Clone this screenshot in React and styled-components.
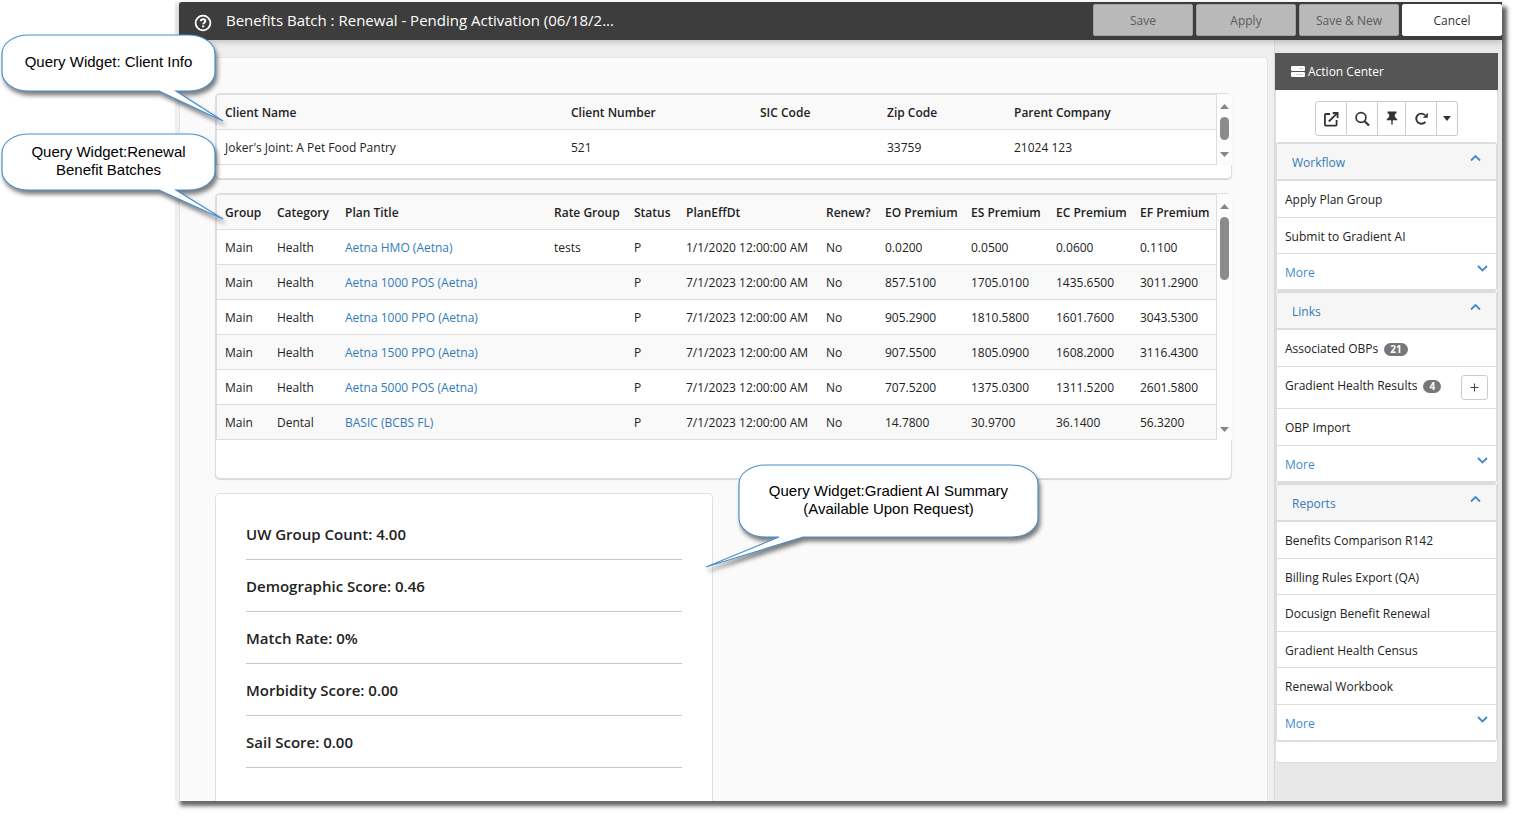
import React from "react";
import styled, { createGlobalStyle } from "styled-components";

const GlobalStyle = createGlobalStyle`
  *, *::before, *::after { box-sizing: border-box; }
  body {
    margin: 0;
    background: #fff;
    color: #222;
    font-family: "Open Sans", "Noto Sans", sans-serif;
    font-size: 12px;
    line-height: 18px;
  }
  button { font-family: inherit; }
`;

/* ---------- window frame ---------- */

const Page = styled.div`
  position: relative;
  height: 100vh;
  min-height: 480px;
  padding: 2px 15px 15px 175px;
  overflow: hidden;
`;

const Window = styled.div`
  display: flex;
  flex-direction: column;
  height: 100%;
  padding-left: 4px;
  background: #efefef;
  box-shadow: 5px 5px 4px rgba(0, 0, 0, 0.6);
`;

const TopBar = styled.header`
  position: relative;
  flex: none;
  display: flex;
  align-items: center;
  height: 38px;
  padding-left: 15px;
  background: #3d3d3d;
  border-top-left-radius: 3px;
  box-shadow: 0 2px 6px rgba(0, 0, 0, 0.2);
`;

const HelpButton = styled.button`
  display: flex;
  margin: 4px 14px 0 0;
  padding: 0;
  border: 0;
  background: none;
`;

const Title = styled.h1`
  flex: 1;
  margin: 0 0 2px;
  color: #fff;
  font-size: 15px;
  font-weight: 400;
  line-height: 20px;
  white-space: nowrap;
`;

const BarActions = styled.div`
  display: flex;
  gap: 3px;
`;

const BarButton = styled.button`
  width: 100px;
  height: 32px;
  margin-bottom: 2px;
  padding: 0;
  border: 1px solid ${(p) => (p.$light ? "#fff" : "#a3a3a3")};
  border-radius: 2px;
  background: ${(p) => (p.$light ? "#fff" : "#b9b9b9")};
  color: ${(p) => (p.$light ? "#333" : "#5c5c5c")};
  font-size: 12px;
`;

const Body = styled.div`
  flex: 1;
  min-height: 0;
  display: flex;
  gap: 6px;
  overflow: hidden;
`;

/* ---------- main column ---------- */

const Main = styled.main`
  flex: 1;
  min-width: 0;
  margin-top: 17px;
  padding: 35px 35px 0 35px;
  display: flex;
  flex-direction: column;
  gap: 14px;
  border: 1px solid #e4e4e4;
  border-bottom: 0;
  border-radius: 3px 3px 0 0;
  background: #fafafa;
`;

const Card = styled.section`
  flex: none;
  border: 1px solid #dcdee2;
  border-radius: 5px;
  background: #fff;
  box-shadow: 0 1px 1px #d4d4d4;
  padding-bottom: ${(p) => p.$foot}px;
`;

const TableFrame = styled.div`
  display: flex;
`;

const DataTable = styled.table`
  flex: 1;
  width: 100%;
  min-width: 0;
  table-layout: fixed;
  border-collapse: separate;
  border-spacing: 0;
  border: 1px solid #dcdee2;
  border-bottom: 0;

  th, td {
    height: 35px;
    padding: 2px 0 0 8px;
    border-bottom: 1px solid #dcdee4;
    text-align: left;
    white-space: nowrap;
  }
  th { font-weight: 600; background: #f9f9f9; }
  tbody tr:nth-child(even) { background: #f9f9f9; }
`;

const PlanLink = styled.a`
  color: #337ab7;
  text-decoration: none;
`;

const ScrollTrack = styled.div`
  flex: none;
  width: 15px;
  display: flex;
  flex-direction: column;
  align-items: center;
  gap: 8px;
  padding: 10px 0 8px;
  background: #fcfcfc;
`;

const ScrollThumb = styled.div`
  width: 9px;
  height: ${(p) => p.$size}px;
  margin-bottom: auto;
  border-radius: 5px;
  background: #8b8b8b;
`;

const SummaryCard = styled.section`
  flex: 1 0 auto;
  width: 49%;
  padding: 14px 30px 0;
  border: 1px solid #e0e0e0;
  border-bottom: 0;
  border-radius: 5px 5px 0 0;
  background: #fff;
`;

const SummaryRow = styled.p`
  height: 52px;
  margin: 0;
  padding-top: 16px;
  border-bottom: 1px solid #c6c6c6;
  font-size: 15px;
  font-weight: 600;
  line-height: 20px;
`;

/* ---------- action center ---------- */

const Side = styled.aside`
  flex: none;
  width: 228px;
  padding: 13px 4px 0 0;
  border-left: 1px solid #d9d9d9;
  background: #e8e8e8;
`;

const SideHead = styled.h2`
  display: flex;
  align-items: center;
  gap: 3px;
  height: 37px;
  margin: 0;
  padding-left: 16px;
  background: #555;
  color: #fff;
  font-size: 12px;
  font-weight: 400;
`;

const SideBody = styled.div`
  padding-bottom: 20px;
  border-left: 1px solid #ddd;
  border-right: 1px solid #ddd;
  border-bottom: 1px solid #ddd;
  border-radius: 0 0 3px 3px;
  background: #fff;
`;

const Tools = styled.div`
  display: flex;
  justify-content: center;
  height: 52px;
  padding-top: 11px;
`;

const ToolButton = styled.button`
  display: flex;
  align-items: center;
  justify-content: center;
  width: ${(p) => p.$w}px;
  height: 35px;
  padding: 0;
  border: 1px solid #ccc;
  background: #fff;
  & + & { border-left: 0; }
  &:first-child { border-radius: 3px 0 0 3px; }
  &:last-child { border-radius: 0 3px 3px 0; }
`;

const Group = styled.section`
  border: 1px solid #ddd;
  border-top-width: 2px;
  border-radius: 3px;
`;

const GroupHead = styled.button`
  display: flex;
  justify-content: space-between;
  width: 100%;
  height: 37px;
  padding: 10px 15px 0;
  border: 0;
  border-bottom: 2px solid #ddd;
  background: #f6f6f6;
  color: #337ab7;
  font-size: 12px;
  line-height: 18px;
`;

const ItemList = styled.ul`
  margin: 0;
  padding: 0;
  list-style: none;
`;

const Item = styled.li`
  display: flex;
  align-items: flex-start;
  height: ${(p) => (p.$tall ? 42 : 36)}px;
  padding: 10px 8px 0;
  border-bottom: 1px solid #ddd;
  &:nth-child(odd) { height: 37px; }
  &:last-child { height: 36px; }
`;

const ItemLink = styled.a`
  color: ${(p) => (p.$more ? "#428bca" : "#222")};
  text-decoration: none;
  white-space: nowrap;
`;

const Badge = styled.span`
  margin: 3px 0 0 6px;
  padding: 0 6px;
  border-radius: 7px;
  background: #777;
  color: #fff;
  font-size: 10px;
  font-weight: 700;
  line-height: 13px;
`;

const AddButton = styled.button`
  display: flex;
  align-items: center;
  justify-content: center;
  width: 27px;
  height: 25px;
  margin: -2px 0 0 auto;
  padding: 0;
  border: 1px solid #ccc;
  border-radius: 3px;
  background: #fff;
`;

const ChevronSlot = styled.span`
  display: flex;
  margin-left: auto;
`;

/* ---------- annotation bubbles ---------- */

const Bubble = styled.div`
  position: absolute;
  left: ${(p) => p.$x}px;
  top: ${(p) => p.$y}px;
  width: ${(p) => p.$w}px;
  height: ${(p) => p.$h}px;
  display: flex;
  align-items: center;
  justify-content: center;
  padding-bottom: 2px;
  color: #000;
  font-family: "Liberation Sans", Arial, sans-serif;
  font-size: 15px;
  line-height: 18px;
  text-align: center;
  white-space: pre-line;

  svg {
    position: absolute;
    left: 0;
    top: 0;
    overflow: visible;
    filter: drop-shadow(2px 4px 2px rgba(0, 0, 0, 0.5));
  }
  span { position: relative; }
`;

function bubblePath(w, h, [a, b, tx, ty]) {
  const rx = 27;
  const ry = 19;
  return `M${rx} 0H${w - rx}C${w - 12} 0 ${w} 8 ${w} ${ry}V${h - ry}C${w} ${h - 8} ${w - 12} ${h} ${w - rx} ${h}H${b}L${tx} ${ty}L${a} ${h}H${rx}C12 ${h} 0 ${h - 8} 0 ${h - ry}V${ry}C0 8 12 0 ${rx} 0Z`;
}

function Callout({ x, y, w, h, tail, children }) {
  return (
    <Bubble $x={x} $y={y} $w={w} $h={h}>
      <svg width={w} height={h} aria-hidden="true">
        <path d={bubblePath(w, h, tail)} fill="#fff" stroke="#4a90cc" strokeWidth="1.2" />
      </svg>
      <span>{children}</span>
    </Bubble>
  );
}

/* ---------- icons ---------- */

const HelpIcon = () => (
  <svg width="18" height="18" viewBox="0 0 18 18" fill="none" stroke="#fff">
    <circle cx="9" cy="9" r="7.4" strokeWidth="1.8" />
    <path d="M6.700 7.300C6.800 5.900 7.800 5.200 9 5.200c1.400 0 2.400.8 2.400 1.900 0 1.600-2.200 1.600-2.200 3.200" strokeWidth="1.900" />
    <path d="M8.200 11.300h2v2H8.200z" fill="#fff" stroke="none" />
  </svg>
);

const PanelIcon = () => (
  <svg width="14" height="11" viewBox="0 0 14 11">
    <rect width="14" height="5" rx="1.3" fill="#fff" />
    <rect y="6" width="14" height="5" rx="1.3" fill="#fff" />
    <path d="M8 2.500h4M5 8.500h7" stroke="#ccc" strokeWidth="1" />
  </svg>
);

const OpenIcon = () => (
  <svg width="16" height="16" viewBox="0 0 16 16" fill="none" stroke="#333" strokeWidth="1.8">
    <path d="M7 3H2.800A.9.9 0 0 0 1.900 3.900V13.800a.9.9 0 0 0 .9.9h9.900a.9.9 0 0 0 .9-.9V9" />
    <path d="M5.800 10.500L14 2.300M9.700 2h4.900v4.900" />
  </svg>
);

const SearchIcon = () => (
  <svg width="16" height="16" viewBox="0 0 16 16" fill="none" stroke="#333">
    <circle cx="7" cy="6.500" r="4.900" strokeWidth="1.700" />
    <path d="M10.600 10.200L15 14.500" strokeWidth="2.200" />
  </svg>
);

const PinIcon = () => (
  <svg width="12" height="15" viewBox="0 0 12 15" fill="#333">
    <path d="M1.500 0.500h9v1.800L8.900 3v3.200c1.400.5 2.300 1.500 2.500 3H.6c.2-1.500 1.100-2.500 2.500-3V3L1.500 2.300z" />
    <path d="M5.300 9h1.400v3.500L6 14.500l-.7-2z" />
  </svg>
);

const ReloadIcon = () => (
  <svg width="15" height="15" viewBox="0 0 15 15" fill="none" stroke="#333">
    <path d="M11.400 10.800A5.100 5.100 0 1 1 11 4.100" strokeWidth="1.900" />
    <path d="M13.800 1.800v5H8.800z" fill="#333" stroke="none" />
  </svg>
);

const Caret = ({ up, size = 9, color = "#858585" }) => (
  <svg width={size} height="5" viewBox="0 0 10 5" preserveAspectRatio="none" style={{ flex: "none" }}>
    <path d={up ? "M0 5L5 0L10 5z" : "M0 0L5 5L10 0z"} fill={color} />
  </svg>
);

const Chevron = ({ up }) => (
  <svg width="11" height="12" viewBox="0 0 11 12" fill="none" stroke="#428bca" strokeWidth="1.800">
    <path d={up ? "M1 6.500L5.500 2L10 6.500" : "M1 2L5.500 6.500L10 2"} />
  </svg>
);

const PlusIcon = () => (
  <svg width="9" height="9" viewBox="0 0 9 9" stroke="#444" strokeWidth="1">
    <path d="M0.500 4.500h8M4.500 0.500v8" />
  </svg>
);

/* ---------- data ---------- */

const clientColumns = [
  ["Client Name", 346],
  ["Client Number", 189],
  ["SIC Code", 127],
  ["Zip Code", 127],
  ["Parent Company", 210],
];
const clientRows = [["Joker's Joint: A Pet Food Pantry", "521", "", "33759", "21024 123"]];

const planColumns = [
  ["Group", 52],
  ["Category", 68],
  ["Plan Title", 209],
  ["Rate Group", 80],
  ["Status", 52],
  ["PlanEffDt", 140],
  ["Renew?", 59],
  ["EO Premium", 86],
  ["ES Premium", 85],
  ["EC Premium", 84],
  ["EF Premium", 84],
];
const july = "7/1/2023 12:00:00 AM";
const planRows = [
  ["Main", "Health", "Aetna HMO (Aetna)", "tests", "P", "1/1/2020 12:00:00 AM", "No", "0.0200", "0.0500", "0.0600", "0.1100"],
  ["Main", "Health", "Aetna 1000 POS (Aetna)", "", "P", july, "No", "857.5100", "1705.0100", "1435.6500", "3011.2900"],
  ["Main", "Health", "Aetna 1000 PPO (Aetna)", "", "P", july, "No", "905.2900", "1810.5800", "1601.7600", "3043.5300"],
  ["Main", "Health", "Aetna 1500 PPO (Aetna)", "", "P", july, "No", "907.5500", "1805.0900", "1608.2000", "3116.4300"],
  ["Main", "Health", "Aetna 5000 POS (Aetna)", "", "P", july, "No", "707.5200", "1375.0300", "1311.5200", "2601.5800"],
  ["Main", "Dental", "BASIC (BCBS FL)", "", "P", july, "No", "14.7800", "30.9700", "36.1400", "56.3200"],
];

const summary = [
  "UW Group Count: 4.00",
  "Demographic Score: 0.46",
  "Match Rate: 0%",
  "Morbidity Score: 0.00",
  "Sail Score: 0.00",
];

const groups = [
  { name: "Workflow", items: [{ label: "Apply Plan Group" }, { label: "Submit to Gradient AI" }] },
  {
    name: "Links",
    items: [
      { label: "Associated OBPs", count: 21 },
      { label: "Gradient Health Results", count: 4, add: true },
      { label: "OBP Import" },
    ],
  },
  {
    name: "Reports",
    items: [
      { label: "Benefits Comparison R142" },
      { label: "Billing Rules Export (QA)" },
      { label: "Docusign Benefit Renewal" },
      { label: "Gradient Health Census" },
      { label: "Renewal Workbook" },
    ],
  },
];

function QueryWidget({ label, columns, rows, linkColumn, thumb, foot }) {
  return (
    <Card $foot={foot} aria-label={label}>
      <TableFrame>
        <DataTable>
          <colgroup>
            {columns.map(([name, width]) => (
              <col key={name} width={width} />
            ))}
          </colgroup>
          <thead>
            <tr>
              {columns.map(([name]) => (
                <th key={name} scope="col">{name}</th>
              ))}
            </tr>
          </thead>
          <tbody>
            {rows.map((row, r) => (
              <tr key={r}>
                {row.map((cell, c) => (
                  <td key={c}>{c === linkColumn ? <PlanLink href="#plan">{cell}</PlanLink> : cell}</td>
                ))}
              </tr>
            ))}
          </tbody>
        </DataTable>
        <ScrollTrack aria-hidden="true">
          <Caret up />
          <ScrollThumb $size={thumb} />
          <Caret />
        </ScrollTrack>
      </TableFrame>
    </Card>
  );
}

function ActionGroup({ name, items }) {
  return (
    <Group>
      <GroupHead type="button" aria-expanded="true">
        {name}
        <Chevron up />
      </GroupHead>
      <ItemList>
        {items.map((item) => (
          <Item key={item.label} $tall={item.add}>
            <ItemLink href="#item">{item.label}</ItemLink>
            {item.count && <Badge>{item.count}</Badge>}
            {item.add && (
              <AddButton type="button" aria-label={`Add ${item.label}`}>
                <PlusIcon />
              </AddButton>
            )}
          </Item>
        ))}
        <Item>
          <ItemLink href="#more" $more>More</ItemLink>
          <ChevronSlot><Chevron /></ChevronSlot>
        </Item>
      </ItemList>
    </Group>
  );
}

export default function App() {
  return (
    <Page>
      <GlobalStyle />
      <Window>
        <TopBar>
          <HelpButton type="button" aria-label="Help"><HelpIcon /></HelpButton>
          <Title>Benefits Batch : Renewal - Pending Activation (06/18/2...</Title>
          <BarActions>
            <BarButton type="button">Save</BarButton>
            <BarButton type="button">Apply</BarButton>
            <BarButton type="button">Save &amp; New</BarButton>
            <BarButton type="button" $light>Cancel</BarButton>
          </BarActions>
        </TopBar>
        <Body>
          <Main>
            <QueryWidget label="Client info" columns={clientColumns} rows={clientRows} thumb={23} foot={13} />
            <QueryWidget label="Renewal benefit batches" columns={planColumns} rows={planRows} linkColumn={2} thumb={63} foot={38} />
            <SummaryCard>
              {summary.map((line) => (
                <SummaryRow key={line}>{line}</SummaryRow>
              ))}
            </SummaryCard>
          </Main>
          <Side>
            <SideHead><PanelIcon />Action Center</SideHead>
            <SideBody>
              <Tools>
                <ToolButton type="button" $w={32} aria-label="Open in new window"><OpenIcon /></ToolButton>
                <ToolButton type="button" $w={31} aria-label="Search"><SearchIcon /></ToolButton>
                <ToolButton type="button" $w={28} aria-label="Pin"><PinIcon /></ToolButton>
                <ToolButton type="button" $w={31} aria-label="Refresh"><ReloadIcon /></ToolButton>
                <ToolButton type="button" $w={21} aria-label="More options"><Caret size={8} color="#333" /></ToolButton>
              </Tools>
              {groups.map((group) => (
                <ActionGroup key={group.name} {...group} />
              ))}
            </SideBody>
          </Side>
        </Body>
      </Window>
      <Callout x={2} y={35} w={213} h={56} tail={[157, 174, 221, 86]}>Query Widget: Client Info</Callout>
      <Callout x={2} y={134} w={213} h={56} tail={[157, 174, 221, 85]}>{"Query Widget:Renewal\nBenefit Batches"}</Callout>
      <Callout x={739} y={465} w={299} h={72} tail={[40, 64, -33, 102]}>{"Query Widget:Gradient AI Summary\n(Available Upon Request)"}</Callout>
    </Page>
  );
}
